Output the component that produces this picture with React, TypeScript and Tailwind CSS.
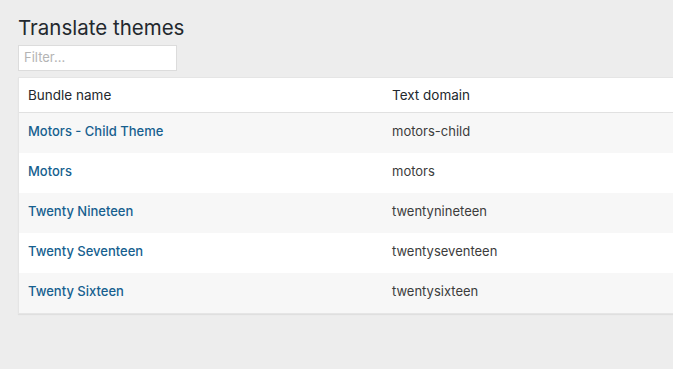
import React from "react";

const rows = [
  ["Motors - Child Theme", "motors-child"],
  ["Motors", "motors"],
  ["Twenty Nineteen", "twentynineteen"],
  ["Twenty Seventeen", "twentyseventeen"],
  ["Twenty Sixteen", "twentysixteen"],
];

export default function App() {
  return (
    <div
      className="w-[673px] h-[369px] overflow-hidden bg-[#ededed] text-[13px] text-[#32373c]"
      style={{ fontFamily: "Inter, 'Noto Sans', sans-serif" }}
    >
      <div className="pl-[18px] pt-[13px]">
        <h1 className="text-[20.5px] leading-[29px] font-normal text-[#23282d]">
          Translate themes
        </h1>
        <div className="mt-[3px] w-[159px] h-[26px] border border-[#dcdcdc] bg-white flex items-center px-[5px]">
          <span className="text-[13px] text-[#b4b4b4]">Filter...</span>
        </div>
        <div className="mt-[6px] w-[740px] border border-[#e5e5e5] bg-white shadow-[0_1px_1px_rgba(0,0,0,0.06)]">
          <div className="flex h-[35px] items-center border-b border-[#e1e1e1] bg-white text-[#23282d] text-[13.5px]">
            <div className="w-[364px] pl-[9px]">Bundle name</div>
            <div className="pl-[9px]">Text domain</div>
          </div>
          {rows.map(([name, domain], i) => (
            <div
              key={name}
              className={`flex h-[40px] items-center pb-[3px] ${i % 2 === 0 ? "bg-[#f7f7f7]" : "bg-white"}`}
            >
              <div className="w-[364px] pl-[9px] font-medium text-[#165f8f]">{name}</div>
              <div className="pl-[9px] text-[#3c3c3c]">{domain}</div>
            </div>
          ))}
        </div>
      </div>
    </div>
  );
}
